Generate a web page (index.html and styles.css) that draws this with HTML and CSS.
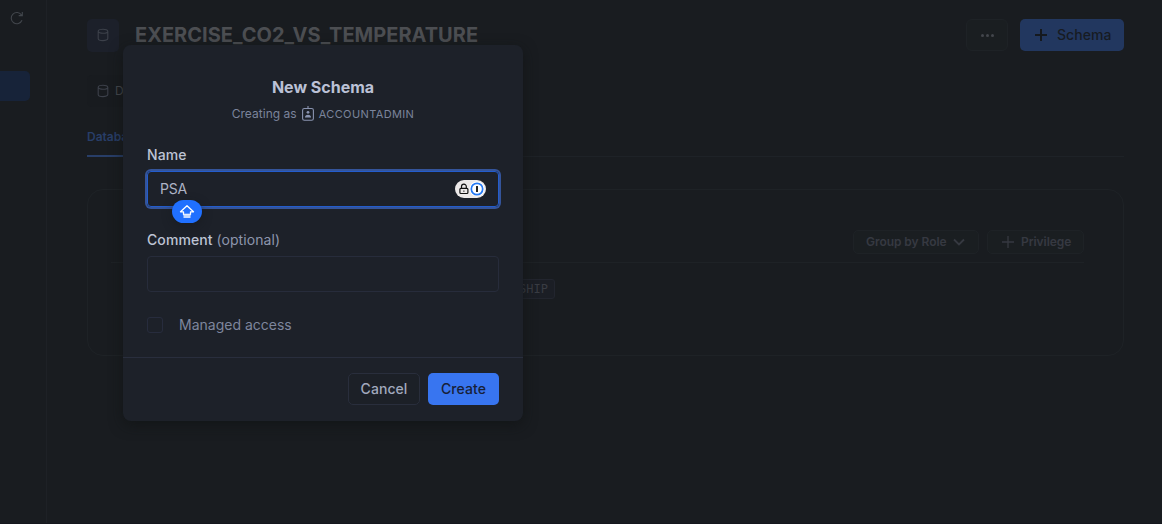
FILE: index.html
```html
<!DOCTYPE html>
<html lang="en">
<head>
<meta charset="utf-8">
<title>New Schema</title>
<link rel="stylesheet" href="styles.css">
</head>
<body>
<div class="app">
  <aside class="sidebar">
    <svg class="refresh" width="14" height="14" viewBox="0 0 14 14" fill="none"><path d="M12 9.2A5.6 5.6 0 1 1 11.6 4.2M12.3 1v3.6H8.7"/></svg>
    <div class="selected"></div>
  </aside>
  <main class="main">
    <header class="header">
      <span class="tile"><svg class="db" width="12" height="14" viewBox="0 0 12 14"><path d="M1.2 3.2C1.2 .5 10.8 .5 10.8 3.2S1.2 5.9 1.2 3.2V10.500C1.200 13.300 10.800 13.300 10.800 10.500V3.200"/></svg></span>
      <h1 class="title">EXERCISE_CO2_VS_TEMPERATURE</h1>
      <button class="more"><i></i><i></i><i></i></button>
      <button class="add"><svg width="12" height="12" viewBox="0 0 12 12"><path d="M6 0v12M0 6h12"/></svg>Schema</button>
    </header>
    <div class="crumbs"><span class="crumb"><svg class="db" width="12" height="14" viewBox="0 0 12 14"><path d="M1.2 3.2C1.2 .5 10.8 .5 10.8 3.2S1.2 5.9 1.2 3.2V10.500C1.200 13.300 10.800 13.300 10.800 10.500V3.200"/></svg>Database</span></div>
    <nav class="tabs"><span class="tab">Database Details</span></nav>
    <section class="panel">
      <div class="tools">
        <button class="small">Group by Role<svg width="12" height="8" viewBox="0 0 12 8"><path class="chevron" d="M1 1.500 6 6.500 11 1.500"/></svg></button>
        <button class="small privilege"><svg width="12" height="12" viewBox="0 0 12 12"><path d="M6 0v12M0 6h12"/></svg>Privilege</button>
      </div>
      <div class="row"><span class="chip">OWNERSHIP</span></div>
    </section>
  </main>
</div>
<div class="modal" role="dialog">
  <div class="body">
    <h2 class="heading">New Schema</h2>
    <p class="role">Creating as <svg width="12" height="15" viewBox="0 0 12 15" fill="none"><rect x=".6" y="2.500" width="10.800" height="11.800" rx="1.800"/><path d="M6 0v2.500"/><circle class="solid" cx="6" cy="6.300" r="1.400"/><path class="solid" d="M3 11.500v-.8Q3.500 8.800 6 8.800T9 10.700v.8z"/></svg><span class="account">ACCOUNTADMIN</span></p>
    <label class="label">Name</label>
    <div class="input focused"><span class="value">PSA</span>
      <svg class="manager" width="31" height="18" viewBox="0 0 31 18"><rect width="31" height="18" rx="9" fill="#ece9e9"/><rect x="4.900" y="8.300" width="8" height="5.200" rx="1" fill="none" stroke="#111" stroke-width="1.200"/><path d="M6.500 8.300V6.600a2.400 2.400 0 0 1 4.800 0v1.700" fill="none" stroke="#111" stroke-width="1.200"/><path d="M8.900 10.500v1.300" stroke="#111"/><circle cx="22" cy="9" r="7.500" fill="#fff"/><circle cx="22" cy="9" r="5.700" fill="#fff" stroke="#2479f5" stroke-width="1.700"/><rect x="21" y="6" width="2" height="6" rx=".3" fill="#222"/></svg>
      <span class="caps"><svg width="16" height="15" viewBox="0 0 16 15"><path d="M8 1.800 14.500 7.800H11.500V10.500H4.500V7.800H1.500z" fill="none" stroke="#fff" stroke-width="1.300" stroke-linejoin="round"/><path d="M4.500 10.500h7V14h-7z" fill="#c4d9ff"/></svg></span>
    </div>
    <label class="label second">Comment <span class="optional">(optional)</span></label>
    <div class="input"></div>
    <div class="check"><span class="box"></span><span class="managed">Managed access</span></div>
  </div>
  <footer class="footer"><button class="cancel">Cancel</button><button class="create">Create</button></footer>
</div>
</body>
</html>
```
FILE: styles.css
```css
* { box-sizing: border-box; }
body { margin: 0; background: #191c20; font-family: Inter, "Liberation Sans", sans-serif; overflow: hidden; }
button { font: inherit; margin: 0; padding: 0; display: flex; align-items: center; }
h1, h2, p { margin: 0; }
svg { flex: none; }
.app { display: flex; height: 524px; border-bottom: 1px solid #15171d; }
.sidebar { width: 47px; border-right: 1px solid #1e2126; padding-top: 11px; }
.refresh { display: block; margin-left: 10px; stroke: #42464c; stroke-width: 1.1; }
.selected { width: 30px; height: 30px; margin-top: 46px; background: #172339; border-radius: 0 5px 5px 0; }
.main { flex: 1; padding: 19px 38px 0 40px; }
.header { display: flex; align-items: center; height: 32px; }
.tile { width: 32px; height: 33px; border-radius: 5px; background: #1c202a; display: flex; align-items: center; justify-content: center; }
.db { fill: none; stroke: #3c404a; stroke-width: 1.1; }
.title { margin-left: 16px; font-size: 20px; line-height: 24px; font-weight: 700; letter-spacing: .02px; color: #4c4e52; flex: 1; }
.more { width: 42px; height: 32px; border: 1px solid #1e2226; border-radius: 6px; background: #1a1e21; justify-content: center; gap: 2px; }
.more i { width: 3px; height: 3px; border-radius: 50%; background: #43464c; }
.add { width: 104px; height: 32px; margin-left: 12px; padding: 0 0 1px 15px; gap: 10px; border: 0; border-radius: 5px; background: #22375f; color: #171b22; font-size: 14px; font-weight: 500; letter-spacing: .05px; }
.add svg { stroke: #15191f; stroke-width: 2; }
.crumbs { margin-top: 24px; display: flex; }
.crumb { height: 32px; padding: 0 10px 1px; display: flex; align-items: center; gap: 6px; font-size: 12px; color: #45484d; background: #181b1f; border-radius: 5px; }
.tabs { height: 50px; border-bottom: 1px solid #1e2227; display: flex; }
.tab { height: 50px; padding-top: 22px; border-bottom: 2px solid #283e68; color: #283e68; font-size: 12px; line-height: 15px; font-weight: 600; }
.panel { margin-top: 32px; height: 167px; border: 1px solid #1e2226; border-radius: 16px; padding: 40px 39px 0 23px; }
.tools { height: 33px; display: flex; justify-content: flex-end; gap: 8px; border-bottom: 1px solid #1e2226; }
.small { width: 126px; height: 24px; padding: 0 0 1px 12px; gap: 6px; border: 1px solid #1e2226; border-radius: 5px; background: #1a1e21; color: #363941; font-size: 12px; font-weight: 600; letter-spacing: -.05px; }
.small svg { stroke: #363941; stroke-width: 1.3; fill: none; }
.small .chevron { stroke-width: 1.8; }
.privilege { width: 97px; padding-left: 14px; gap: 7px; }
.row { display: flex; padding: 16px 0 0 364px; }
.chip { width: 80px; height: 20px; border: 1px solid #22252e; border-radius: 3px; background: #1b1e25; color: #393c43; font: 12px/19px "DejaVu Sans Mono", monospace; text-align: right; padding-right: 6px; }
.modal { position: absolute; left: 123px; top: 45px; width: 400px; height: 376px; background: #1d2129; border-radius: 8px; box-shadow: 0 4px 14px rgba(15,18,19,.65); color: #bdc4d5; }
.body { height: 313px; padding: 31px 24px 0; border-bottom: 1px solid #292e3d; }
.heading { text-align: center; font-size: 16px; line-height: 23px; font-weight: 700; letter-spacing: 0; color: #bbc1d6; }
.role { display: flex; justify-content: center; align-items: center; height: 18px; margin-top: 6px; padding-bottom: 1px; font-size: 12px; color: #7b849b; letter-spacing: .03px; }
.role svg { margin: 0 5px; stroke: #8a94b0; stroke-width: 1.1; }
.solid { fill: #8a94b0; stroke: none; }
.account { font-size: 11px; letter-spacing: .38px; }
.label { display: block; margin-top: 22px; font-size: 14px; line-height: 20px; font-weight: 500; letter-spacing: .08px; }
.optional { font-weight: 400; color: #8d96ad; }
.input { position: relative; margin-top: 6px; height: 36px; border: 1px solid #272c3b; border-radius: 4px; padding: 0 12px; display: flex; align-items: center; justify-content: space-between; font-size: 14px; color: #aeb4c6; }
.value { padding-bottom: 1px; letter-spacing: -.15px; }
.focused { border-color: #235ccc; box-shadow: 0 0 0 2px #34549a; }
.caps { position: absolute; left: 24px; top: 28px; width: 30px; height: 23px; border-radius: 12px; background: #2070ff; display: flex; align-items: center; justify-content: center; box-shadow: 0 3px 10px rgba(20,23,28,.5); }
.second { margin-top: 23px; }
.check { display: flex; align-items: center; margin-top: 25px; height: 16px; font-size: 14px; color: #7e869d; }
.managed { padding-bottom: 1px; }
.box { width: 16px; height: 16px; border: 1px solid #272c3d; border-radius: 3px; margin-right: 16px; }
.footer { display: flex; justify-content: flex-end; gap: 8px; padding: 15px 24px 0; }
.footer button { height: 32px; padding-bottom: 1px; justify-content: center; font-size: 14px; font-weight: 500; letter-spacing: .05px; border-radius: 5px; }
.footer .cancel { width: 72px; border: 1px solid #292e3c; background: #1c2027; color: #a1a9bd; }
.footer .create { width: 71px; border: 0; background: #3875f0; color: #172037; }
```
